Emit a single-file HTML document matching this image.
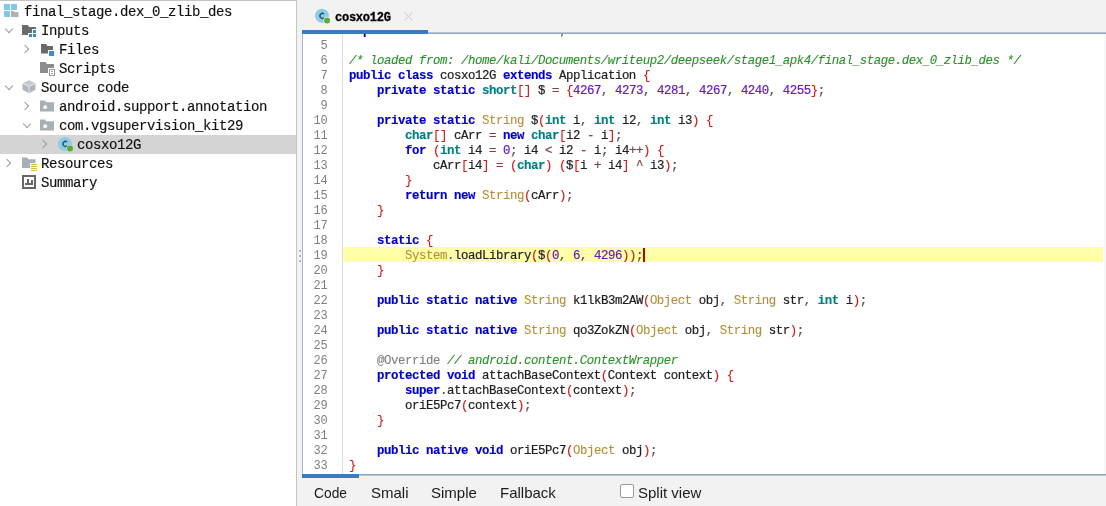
<!DOCTYPE html>
<html><head><meta charset="utf-8">
<style>
html,body{margin:0;padding:0;}
body{width:1106px;height:506px;overflow:hidden;background:#f2f2f2;position:relative;font-family:"Liberation Mono",monospace;}
.abs{position:absolute;}
#tree,#tabbar,#editor,#bot{will-change:transform;}
#tree{position:absolute;left:0;top:0;width:296px;height:506px;background:#fff;border-top:1px solid #c4c4c4;border-right:1px solid #c4c4c4;box-sizing:content-box;}
.row{position:absolute;left:0;height:19px;width:296px;font-size:14px;letter-spacing:-0.4px;line-height:19px;color:#111;white-space:pre;}
.row .t{position:absolute;top:1px;-webkit-text-stroke:0.15px currentColor;}
.sel{background:#d4d4d4;}
.chev{position:absolute;width:5px;height:5px;border-right:1.2px solid #9c9c9c;border-bottom:1.2px solid #9c9c9c;}
.chev.r{transform:rotate(-45deg);}
.chev.d{transform:rotate(45deg);}
#split{position:absolute;left:297px;top:0;width:5px;height:506px;background:#f2f2f2;}
.dot{position:absolute;left:299px;width:2px;height:2px;background:#a4a4a4;border-radius:1px;}
#tabbar{position:absolute;left:302px;top:0;width:804px;height:34px;background:#f2f2f2;}
#editor{position:absolute;left:302px;top:34px;width:804px;height:440px;background:#fff;overflow:hidden;border-left:1px solid #a6b8cc;box-sizing:border-box;}
#gutter{position:absolute;left:0;top:0;width:39px;height:440px;border-right:1px solid #dcdcdc;background:#fff;}
.gn{position:absolute;left:0;width:24.5px;text-align:right;height:15px;line-height:15px;padding-top:2px;box-sizing:border-box;font-size:12px;color:#808080;letter-spacing:-0.2px;}
.ln{-webkit-text-stroke:0.2px currentColor;position:absolute;left:46px;height:15px;line-height:15px;padding-top:2px;box-sizing:border-box;font-size:12.4px;letter-spacing:-0.44px;white-space:pre;color:#202020;width:760px;}
.ln.hl{background:#ffffaa;left:40px;padding-left:6px;}
.kw{color:#0000cc;font-weight:bold;-webkit-text-stroke:0.15px currentColor;}
.ty{color:#008080;font-weight:bold;-webkit-text-stroke:0.15px currentColor;}
.cl{color:#b48f38;-webkit-text-stroke:0.1px currentColor;}
.sep{color:#d01818;-webkit-text-stroke:0.1px currentColor;}
.num{color:#6a1ac0;}
.op{color:#804040;}
.gr{color:#555;}
.cm{color:#2a922a;font-style:italic;-webkit-text-stroke:0.1px currentColor;}
.an{color:#808080;-webkit-text-stroke:0.1px currentColor;}
.caret{display:inline-block;width:2px;height:12px;background:#c00000;vertical-align:-2px;margin-left:1px;}
#bot{position:absolute;left:297px;top:474px;width:809px;height:32px;background:#f2f2f2;}
.btab{position:absolute;top:10px;line-height:17px;font-family:"Liberation Sans",sans-serif;font-size:15px;color:#1a1a1a;}
</style></head><body>
<div id="tree">
  <div class="row" style="top:1px">
    <svg class="abs" style="left:4px;top:2px" width="15" height="14" viewBox="0 0 15 14">
      <rect x="0" y="0" width="6" height="6" fill="#80c8e4"/>
      <rect x="7" y="0" width="6" height="6" fill="#80c8e4"/>
      <rect x="0" y="7" width="6" height="6" fill="#80c8e4"/>
      <path d="M7 7h2.5l1 1h4v5h-7.5z" fill="#b0b0b0"/>
    </svg>
    <span class="t" style="left:24px">final_stage.dex_0_zlib_des</span>
  </div>
  <div class="row" style="top:20px">
    <div class="chev d" style="left:6px;top:5px"></div>
    <svg class="abs" style="left:22px;top:4px" width="15" height="13" viewBox="0 0 15 13">
      <path d="M0 0H5.7L7 2H14V10H0Z" fill="#6a6a6a"/>
      <rect x="10" y="4" width="5" height="9" fill="#fff"/>
      <rect x="6" y="8" width="9" height="5" fill="#fff"/>
      <rect x="11" y="5" width="3" height="3" fill="#3a88c4"/>
      <rect x="7" y="9" width="3" height="3" fill="#3a88c4"/>
      <rect x="11" y="9" width="3" height="3" fill="#3a88c4"/>
    </svg>
    <span class="t" style="left:41px">Inputs</span>
  </div>
  <div class="row" style="top:39px">
    <div class="chev r" style="left:22px;top:6px"></div>
    <svg class="abs" style="left:41px;top:4px" width="14" height="13" viewBox="0 0 14 13">
      <path d="M0 0H5L6.5 2H12V9.5H0Z" fill="#6a6a6a"/>
      <rect x="7" y="6" width="7" height="7" fill="#fff"/>
      <rect x="8" y="7" width="5" height="5" fill="#3a8fd2"/>
    </svg>
    <span class="t" style="left:59px">Files</span>
  </div>
  <div class="row" style="top:58px">
    <svg class="abs" style="left:40px;top:3px" width="16" height="15" viewBox="0 0 16 15">
      <path d="M0 0H5.5L7 2H14V11H0Z" fill="#8c8c8c"/>
      <rect x="8" y="6" width="8" height="9" fill="#fff"/>
      <rect x="9.5" y="7.5" width="5" height="6" fill="none" stroke="#9a9a9a" stroke-width="1"/>
      <rect x="11" y="9" width="2" height="1" fill="#9a9a9a"/><rect x="11" y="11" width="2" height="1" fill="#9a9a9a"/>
    </svg>
    <span class="t" style="left:59px">Scripts</span>
  </div>
  <div class="row" style="top:77px">
    <div class="chev d" style="left:6px;top:5px"></div>
    <svg class="abs" style="left:22px;top:2px" width="14" height="14" viewBox="0 0 14 14">
      <path d="M7 0.5l6.5 2.9v6.4l-6.5 3.4l-6.5-3.4v-6.4z" fill="#b0b6bc"/>
      <path d="M7 0.5l6.5 2.9l-6.5 3l-6.5-3z" fill="#c6cacf"/>
      <path d="M0.5 3.4l6.5 3l6.5-3" fill="none" stroke="#eceef0" stroke-width="0.9"/>
      <path d="M7 6.4v6.6" stroke="#eceef0" stroke-width="0.9"/>
    </svg>
    <span class="t" style="left:41px">Source code</span>
  </div>
  <div class="row" style="top:96px">
    <div class="chev r" style="left:22px;top:6px"></div>
    <svg class="abs" style="left:40px;top:3px" width="14" height="12" viewBox="0 0 14 12">
      <path d="M0 0.5H4.8L6.3 2.2H14V11.5H0Z" fill="#a8b0b6"/>
      <circle cx="5.2" cy="7.2" r="1.9" fill="#fff"/>
    </svg>
    <span class="t" style="left:59px">android.support.annotation</span>
  </div>
  <div class="row" style="top:115px">
    <div class="chev d" style="left:24px;top:5px"></div>
    <svg class="abs" style="left:40px;top:3px" width="14" height="12" viewBox="0 0 14 12">
      <path d="M0 0.5H4.8L6.3 2.2H14V11.5H0Z" fill="#a8b0b6"/>
      <circle cx="5.2" cy="7.2" r="1.9" fill="#fff"/>
    </svg>
    <span class="t" style="left:59px">com.vgsupervision_kit29</span>
  </div>
  <div class="row sel" style="top:134px">
    <div class="chev r" style="left:40px;top:6px"></div>
    <svg class="abs" style="left:57px;top:0px" width="18" height="18" viewBox="0 0 18 18">
      <circle cx="8" cy="9" r="7" fill="#8ecbe4"/>
      <path d="M10 7.05A2.45 2.45 0 1 0 10 10.75" fill="none" stroke="#1f4f6c" stroke-width="1.35"/>
      <circle cx="13" cy="13.4" r="3.6" fill="#d4d4d4"/>
      <circle cx="13" cy="13.4" r="3" fill="#58ad3e"/>
    </svg>
    <span class="t" style="left:77px">cosxo12G</span>
  </div>
  <div class="row" style="top:153px">
    <div class="chev r" style="left:4px;top:6px"></div>
    <svg class="abs" style="left:22px;top:3px" width="16" height="16" viewBox="0 0 16 16">
      <path d="M0 0.5H5L6.5 2.2H13.5V11H0Z" fill="#a8b0b6"/>
      <rect x="8" y="6" width="8" height="10" fill="#fff"/>
      <rect x="9" y="7" width="6" height="1" fill="#e2b23e"/>
      <rect x="9" y="9" width="6" height="1" fill="#e2b23e"/>
      <rect x="9" y="11" width="6" height="1" fill="#e2b23e"/>
      <rect x="9" y="13" width="6" height="1" fill="#e2b23e"/>
    </svg>
    <span class="t" style="left:41px">Resources</span>
  </div>
  <div class="row" style="top:172px">
    <svg class="abs" style="left:22px;top:2px" width="14" height="14" viewBox="0 0 14 14">
      <rect x="1" y="1" width="12" height="12" fill="none" stroke="#666" stroke-width="2"/>
      <rect x="3" y="8" width="8" height="2" fill="#666"/>
      <rect x="5" y="4" width="2" height="4" fill="#666"/>
      <rect x="9" y="5" width="2" height="3" fill="#666"/>
    </svg>
    <span class="t" style="left:41px">Summary</span>
  </div>
</div>
<div id="split"></div>
<div class="dot" style="top:250px"></div>
<div class="dot" style="top:255px"></div>
<div class="dot" style="top:260px"></div>

<div id="tabbar">
  <div class="abs" style="left:0;top:30px;width:126px;height:4px;background:#3a7cbf;"></div>
  <div class="abs" style="left:126px;top:32px;width:678px;height:1px;background:#b4c4d4;"></div><div class="abs" style="left:126px;top:33px;width:678px;height:1px;background:#94a8bc;"></div>
  <svg class="abs" style="left:12px;top:7px" width="18" height="18" viewBox="0 0 18 18">
    <circle cx="8" cy="8.7" r="7" fill="#8ecbe4"/>
    <path d="M10 7.05A2.45 2.45 0 1 0 10 10.75" fill="none" stroke="#1f4f6c" stroke-width="1.35"/>
    <circle cx="13" cy="13.4" r="3.6" fill="#f2f2f2"/>
    <circle cx="13" cy="13.4" r="3" fill="#58ad3e"/>
  </svg>
  <span class="abs" style="left:33px;top:11px;font-size:12px;line-height:15px;font-weight:bold;color:#000;letter-spacing:-0.25px;-webkit-text-stroke:0.3px #000;">cosxo12G</span>
  <svg class="abs" style="left:102px;top:12px" width="9" height="9" viewBox="0 0 9 9"><path d="M0.5 0.5L8.5 8.5M8.5 0.5L0.5 8.5" stroke="#c4c4c4" stroke-width="1"/></svg>
</div>

<div id="editor">
  <div id="gutter">
<div class="gn" style="top:-12px">4</div>
<div class="gn" style="top:3px">5</div>
<div class="gn" style="top:18px">6</div>
<div class="gn" style="top:33px">7</div>
<div class="gn" style="top:48px">8</div>
<div class="gn" style="top:63px">9</div>
<div class="gn" style="top:78px">10</div>
<div class="gn" style="top:93px">11</div>
<div class="gn" style="top:108px">12</div>
<div class="gn" style="top:123px">13</div>
<div class="gn" style="top:138px">14</div>
<div class="gn" style="top:153px">15</div>
<div class="gn" style="top:168px">16</div>
<div class="gn" style="top:183px">17</div>
<div class="gn" style="top:198px">18</div>
<div class="gn" style="top:213px">19</div>
<div class="gn" style="top:228px">20</div>
<div class="gn" style="top:243px">21</div>
<div class="gn" style="top:258px">22</div>
<div class="gn" style="top:273px">23</div>
<div class="gn" style="top:288px">24</div>
<div class="gn" style="top:303px">25</div>
<div class="gn" style="top:318px">26</div>
<div class="gn" style="top:333px">27</div>
<div class="gn" style="top:348px">28</div>
<div class="gn" style="top:363px">29</div>
<div class="gn" style="top:378px">30</div>
<div class="gn" style="top:393px">31</div>
<div class="gn" style="top:408px">32</div>
<div class="gn" style="top:423px">33</div>
  </div>
<div class="ln" style="top:-12px;clip-path:inset(12px 0 0 0)">  <span class="kw">p</span>                           <span class="gr">;</span></div>
<div class="ln" style="top:3px"></div>
<div class="ln" style="top:18px"><span class="cm">/* loaded from: /home/kali/Documents/writeup2/deepseek/stage1_apk4/final_stage.dex_0_zlib_des */</span></div>
<div class="ln" style="top:33px"><span class="kw">public</span> <span class="kw">class</span> cosxo12G <span class="kw">extends</span> Application <span class="sep">{</span></div>
<div class="ln" style="top:48px">    <span class="kw">private</span> <span class="kw">static</span> <span class="ty">short</span><span class="sep">[]</span> $ <span class="op">=</span> <span class="sep">{</span><span class="num">4267</span><span class="gr">,</span> <span class="num">4273</span><span class="gr">,</span> <span class="num">4281</span><span class="gr">,</span> <span class="num">4267</span><span class="gr">,</span> <span class="num">4240</span><span class="gr">,</span> <span class="num">4255</span><span class="sep">}</span><span class="gr">;</span></div>
<div class="ln" style="top:63px"></div>
<div class="ln" style="top:78px">    <span class="kw">private</span> <span class="kw">static</span> <span class="cl">String</span> $<span class="sep">(</span><span class="ty">int</span> i<span class="gr">,</span> <span class="ty">int</span> i2<span class="gr">,</span> <span class="ty">int</span> i3<span class="sep">)</span> <span class="sep">{</span></div>
<div class="ln" style="top:93px">        <span class="ty">char</span><span class="sep">[]</span> cArr <span class="op">=</span> <span class="kw">new</span> <span class="ty">char</span><span class="sep">[</span>i2 <span class="op">-</span> i<span class="sep">]</span><span class="gr">;</span></div>
<div class="ln" style="top:108px">        <span class="kw">for</span> <span class="sep">(</span><span class="ty">int</span> i4 <span class="op">=</span> <span class="num">0</span><span class="gr">;</span> i4 <span class="op">&lt;</span> i2 <span class="op">-</span> i<span class="gr">;</span> i4<span class="op">++</span><span class="sep">)</span> <span class="sep">{</span></div>
<div class="ln" style="top:123px">            cArr<span class="sep">[</span>i4<span class="sep">]</span> <span class="op">=</span> <span class="sep">(</span><span class="ty">char</span><span class="sep">)</span> <span class="sep">(</span>$<span class="sep">[</span>i <span class="op">+</span> i4<span class="sep">]</span> <span class="op">^</span> i3<span class="sep">)</span><span class="gr">;</span></div>
<div class="ln" style="top:138px">        <span class="sep">}</span></div>
<div class="ln" style="top:153px">        <span class="kw">return</span> <span class="kw">new</span> <span class="cl">String</span><span class="sep">(</span>cArr<span class="sep">)</span><span class="gr">;</span></div>
<div class="ln" style="top:168px">    <span class="sep">}</span></div>
<div class="ln" style="top:183px"></div>
<div class="ln" style="top:198px">    <span class="kw">static</span> <span class="sep">{</span></div>
<div class="ln hl" style="top:213px">        <span class="cl">System</span><span class="gr">.</span>loadLibrary<span class="sep">(</span>$<span class="sep">(</span><span class="num">0</span><span class="gr">,</span> <span class="num">6</span><span class="gr">,</span> <span class="num">4296</span><span class="sep">))</span><span class="gr">;</span></div>
<div class="ln" style="top:228px">    <span class="sep">}</span></div>
<div class="ln" style="top:243px"></div>
<div class="ln" style="top:258px">    <span class="kw">public</span> <span class="kw">static</span> <span class="kw">native</span> <span class="cl">String</span> k1lkB3m2AW<span class="sep">(</span><span class="cl">Object</span> obj<span class="gr">,</span> <span class="cl">String</span> str<span class="gr">,</span> <span class="ty">int</span> i<span class="sep">)</span><span class="gr">;</span></div>
<div class="ln" style="top:273px"></div>
<div class="ln" style="top:288px">    <span class="kw">public</span> <span class="kw">static</span> <span class="kw">native</span> <span class="cl">String</span> qo3ZokZN<span class="sep">(</span><span class="cl">Object</span> obj<span class="gr">,</span> <span class="cl">String</span> str<span class="sep">)</span><span class="gr">;</span></div>
<div class="ln" style="top:303px"></div>
<div class="ln" style="top:318px">    <span class="an">@Override</span> <span class="cm">// android.content.ContextWrapper</span></div>
<div class="ln" style="top:333px">    <span class="kw">protected</span> <span class="kw">void</span> attachBaseContext<span class="sep">(</span>Context context<span class="sep">)</span> <span class="sep">{</span></div>
<div class="ln" style="top:348px">        <span class="kw">super</span><span class="gr">.</span>attachBaseContext<span class="sep">(</span>context<span class="sep">)</span><span class="gr">;</span></div>
<div class="ln" style="top:363px">        oriE5Pc7<span class="sep">(</span>context<span class="sep">)</span><span class="gr">;</span></div>
<div class="ln" style="top:378px">    <span class="sep">}</span></div>
<div class="ln" style="top:393px"></div>
<div class="ln" style="top:408px">    <span class="kw">public</span> <span class="kw">native</span> <span class="kw">void</span> oriE5Pc7<span class="sep">(</span><span class="cl">Object</span> obj<span class="sep">)</span><span class="gr">;</span></div>
<div class="ln" style="top:423px"><span class="sep">}</span></div>
<div class="ln" style="top:438px"></div>
<div class="abs" style="left:340px;top:214px;width:2px;height:14px;background:#b80000"></div>
  <div class="abs" style="left:801px;top:0;width:2px;height:440px;background:#f7f7f7"></div>
</div>

<div id="bot">
  <div class="abs" style="left:5px;top:0;width:57px;height:4px;background:#3a7cbf;"></div>
  <div class="abs" style="left:62px;top:0;width:747px;height:1px;background:#94a8bc;"></div><div class="abs" style="left:62px;top:1px;width:747px;height:1px;background:#b4c4d4;"></div>
  <span class="btab" style="left:17px;transform:scaleX(0.92);transform-origin:0 0">Code</span>
  <span class="btab" style="left:74px">Smali</span>
  <span class="btab" style="left:134px">Simple</span>
  <span class="btab" style="left:203px">Fallback</span>
  <div class="abs" style="left:323px;top:10px;width:14px;height:14px;border:1px solid #9a9a9a;background:#fff;border-radius:2px;box-sizing:border-box;"></div>
  <span class="btab" style="left:341px">Split view</span>
</div>
</body></html>
